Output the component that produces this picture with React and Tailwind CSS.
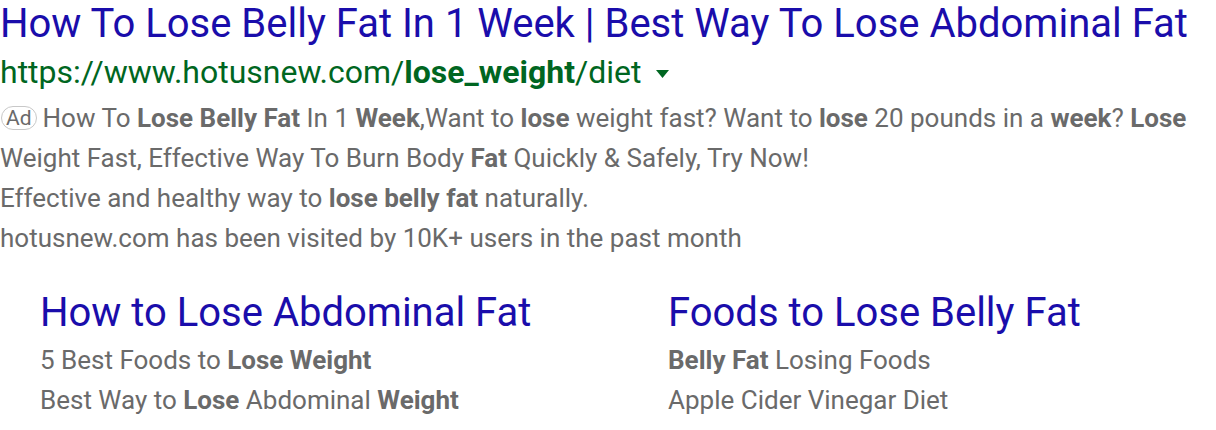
import React from 'react';

const sitelinks = [
  {
    title: 'How to Lose Abdominal Fat',
    lines: [
      <>5 Best Foods to <b className="font-bold">Lose Weight</b></>,
      <>Best Way to <b className="font-bold">Lose</b> Abdominal <b className="font-bold">Weight</b></>,
    ],
  },
  {
    title: 'Foods to Lose Belly Fat',
    lines: [
      <><b className="font-bold">Belly Fat</b> Losing Foods</>,
      <>Apple Cider Vinegar Diet</>,
    ],
  },
];

export default function App() {
  return (
    <div className="w-[1216px] h-[430px] bg-white overflow-hidden font-['Roboto',sans-serif]">
      {/* Headline */}
      <h1 className="text-[40px] leading-[48px] text-[#1a0dab] whitespace-nowrap">
        How To Lose Belly Fat In 1 Week | Best Way To Lose Abdominal Fat
      </h1>

      {/* Display URL */}
      <div className="flex items-center text-[32px] leading-[48px] text-[#006621] whitespace-nowrap">
        <span>
          https://www.hotusnew.com/<b className="font-bold">lose_weight</b>/diet
        </span>
        <svg width="13" height="8" viewBox="0 0 13 8" className="ml-[14px] mt-[4px]">
          <path d="M0 0h13L6.5 8z" fill="#006621" />
        </svg>
      </div>

      {/* Description */}
      <div className="text-[26px] leading-[40px] text-[#6a6a6a] mt-[2px]">
        <p className="whitespace-nowrap">
          <span className="inline-block align-middle mr-[6px] ml-[1px] px-[4px] h-[24px] leading-[22px] text-[21px] border border-[#c8c8c8] rounded-[12px] relative -top-[2px]">
            Ad
          </span>
          How To <b className="font-bold">Lose Belly Fat</b> In 1 <b className="font-bold">Week</b>,Want to{' '}
          <b className="font-bold">lose</b> weight fast? Want to <b className="font-bold">lose</b> 20 pounds in a{' '}
          <b className="font-bold">week</b>? <b className="font-bold">Lose</b>
        </p>
        <p className="whitespace-nowrap">
          Weight Fast, Effective Way To Burn Body <b className="font-bold">Fat</b> Quickly &amp; Safely, Try Now!
        </p>
        <p className="whitespace-nowrap">
          Effective and healthy way to <b className="font-bold">lose belly fat</b> naturally.
        </p>
        <p className="whitespace-nowrap">hotusnew.com has been visited by 10K+ users in the past month</p>
      </div>

      {/* Sitelinks */}
      <div className="grid grid-cols-[628px_1fr] pl-[40px] mt-[28px]">
        {sitelinks.map((s) => (
          <div key={s.title}>
            <h2 className="text-[40px] leading-[54px] text-[#1a0dab] whitespace-nowrap">{s.title}</h2>
            {s.lines.map((l, i) => (
              <p key={i} className="text-[26px] leading-[40px] text-[#6a6a6a] whitespace-nowrap">
                {l}
              </p>
            ))}
          </div>
        ))}
      </div>
    </div>
  );
}
